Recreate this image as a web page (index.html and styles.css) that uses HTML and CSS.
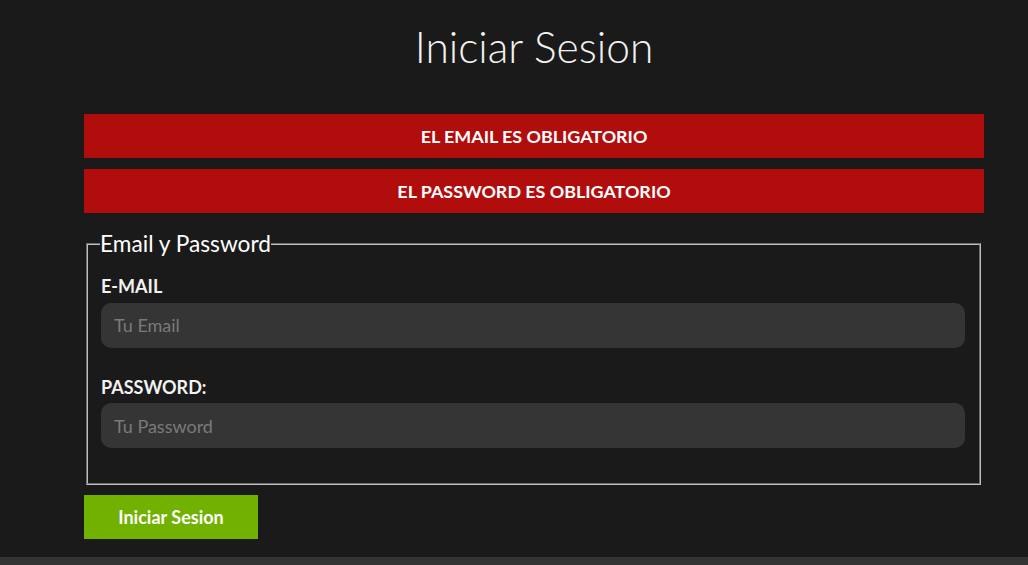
FILE: index.html
```html
<!DOCTYPE html>
<html lang="es">
<head>
<meta charset="utf-8">
<title>Iniciar Sesion</title>
<link rel="stylesheet" href="styles.css">
</head>
<body>
<main class="page">
  <h1 class="title">Iniciar Sesion</h1>
  <div class="alert">El Email es Obligatorio</div>
  <div class="alert">El Password es Obligatorio</div>
  <form class="form">
    <fieldset class="fieldset">
      <legend class="legend">Email y Password</legend>
      <div class="field">
        <label class="label" for="email">E-mail</label>
        <input class="input" id="email" type="email" placeholder="Tu Email">
      </div>
      <div class="field">
        <label class="label" for="password">Password:</label>
        <input class="input" id="password" type="password" placeholder="Tu Password">
      </div>
    </fieldset>
    <button class="button" type="submit">Iniciar Sesion</button>
  </form>
</main>
<footer class="footer"></footer>
</body>
</html>
```
FILE: styles.css
```css
* { box-sizing: border-box; }
html, body { margin: 0; padding: 0; }
body {
  background: #1a1a1a;
  color: #ffffff;
  font-family: Lato, "Open Sans", sans-serif;
  min-height: 565px;
  display: flex;
  flex-direction: column;
}
.page {
  width: 900px;
  margin-left: 84px;
  padding-top: 21px;
  flex: 1;
}
.title {
  margin: 0 0 42px;
  font-size: 42.5px;
  font-weight: 300;
  line-height: 1.2;
  text-align: center;
  color: #f2f2f2;
}
.alert {
  background: #b20d0d;
  height: 44px;
  display: flex;
  align-items: center;
  justify-content: center;
  text-transform: uppercase;
  font-weight: 700;
  font-size: 17.9px;
  margin-bottom: 11px;
}
.form { margin-top: 17px; }
.fieldset {
  margin: 0 3px 0 2px;
  padding: 0 14px 35px 13px;
  border: 2px groove #c0c0c0;
}
.legend {
  font-size: 22.7px;
  line-height: 1.2;
  padding: 0;
  margin-left: -1px;
}
.field { margin-top: 19px; }
.field + .field { margin-top: 29px; }
.label {
  display: block;
  font-size: 18px;
  font-weight: 700;
  line-height: 1.2;
  text-transform: uppercase;
  color: #f2f2f2;
  margin-bottom: 5px;
}
.input {
  display: block;
  width: 100%;
  height: 45px;
  border: none;
  border-radius: 10px;
  background: #353535;
  color: #fff;
  padding: 0 13px;
  font-family: inherit;
  font-size: 18px;
  outline: none;
}
.input::placeholder { color: #7a7a7a; }
.button {
  margin-top: 10px;
  width: 174px;
  height: 44px;
  border: none;
  background: #71b100;
  color: #fff;
  font-family: inherit;
  font-weight: 700;
  font-size: 18px;
  cursor: pointer;
}
.footer {
  height: 8px;
  background: #333333;
}
```
